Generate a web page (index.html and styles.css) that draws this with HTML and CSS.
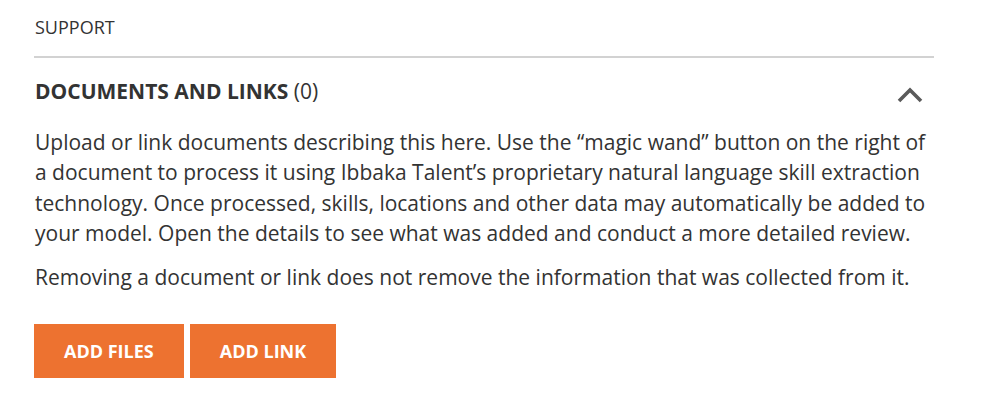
FILE: index.html
```html
<!DOCTYPE html>
<html>
<head>
<meta charset="utf-8">
<link rel="stylesheet" href="styles.css">
</head>
<body>
<div class="panel">
  <div class="section-title">SUPPORT</div>
  <div class="docs">
    <div class="docs-head">
      <h2 class="docs-title"><strong>DOCUMENTS AND LINKS</strong> (0)</h2>
      <svg class="chevron" width="28" height="18" viewBox="0 0 28 18"><path d="M3 15 L14 4 L25 15" fill="none" stroke="#5a5a5a" stroke-width="3.6"/></svg>
    </div>
    <p class="desc">Upload or link documents describing this here. Use the “magic wand” button on the right of a document to process it using Ibbaka Talent’s proprietary natural language skill extraction technology. Once processed, skills, locations and other data may automatically be added to your model. Open the details to see what was added and conduct a more detailed review.</p>
    <p class="desc">Removing a document or link does not remove the information that was collected from it.</p>
    <div class="actions">
      <button class="btn">ADD FILES</button>
      <button class="btn">ADD LINK</button>
    </div>
  </div>
</div>
</body>
</html>
```
FILE: styles.css
```css
html, body {
  margin: 0;
  padding: 0;
  background: #fff;
}
body {
  font-family: "Open Sans", "Noto Sans", sans-serif;
  color: #333;
}
.panel {
  width: 900px;
  margin-left: 34px;
}
.section-title {
  font-size: 18px;
  line-height: 24px;
  padding: 15px 1px 17px;
  border-bottom: 2px solid #d2d2d2;
}
.docs-head {
  display: flex;
  align-items: flex-start;
  justify-content: space-between;
  margin-top: 18px;
}
.docs-title {
  margin: 0;
  padding-left: 1px;
  font-size: 21px;
  font-weight: 400;
  line-height: 30px;
}
.docs-title strong {
  font-weight: 700;
}
.chevron {
  display: block;
  margin-right: 10px;
  margin-top: 10px;
}
.desc {
  margin: 20.5px 0 0;
  padding-left: 1px;
  font-size: 21px;
  line-height: 30.5px;
}
.desc + .desc {
  margin-top: 13px;
}
.actions {
  display: flex;
  gap: 6px;
  margin-top: 32px;
}
.btn {
  background: #ed7230;
  color: #fff;
  border: 0;
  height: 54px;
  padding: 0 30px;
  font-family: "Open Sans", "Noto Sans", sans-serif;
  font-weight: 700;
  font-size: 18px;
  cursor: pointer;
}
```
